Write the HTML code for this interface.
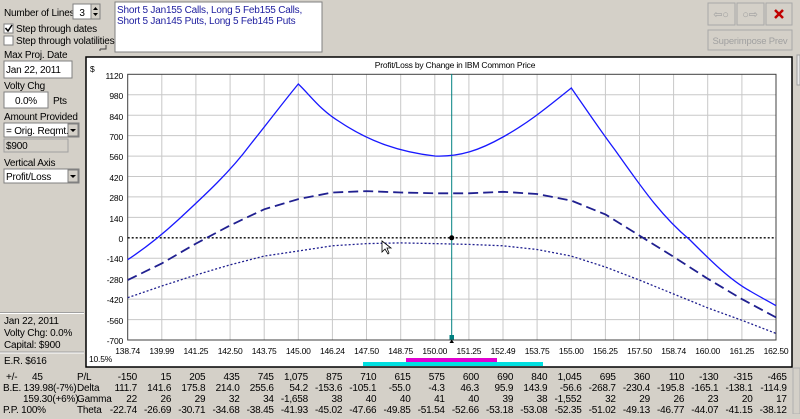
<!DOCTYPE html>
<html><head><meta charset="utf-8"><style>
body{margin:0;width:800px;height:414px;overflow:hidden;background:#d4d0c8;font-family:"Liberation Sans",sans-serif;}
svg text{font-family:"Liberation Sans",sans-serif;}
</style></head><body>
<svg width="800" height="414" xmlns="http://www.w3.org/2000/svg" font-size="10" letter-spacing="-0.2" fill="#000">
<rect width="800" height="414" fill="#d4d0c8"/>
<text x="4" y="16">Number of Lines</text>
<rect x="73" y="4" width="18" height="15" fill="#fff" stroke="#808080"/>
<text x="82" y="16" text-anchor="middle">3</text>
<rect x="91" y="4" width="9" height="15" fill="#d4d0c8" stroke="#808080"/>
<path d="M93 10 L95.5 7 L98 10Z M93 13 L95.5 16 L98 13Z" fill="#000"/>
<rect x="4" y="24" width="9" height="9" fill="#fff" stroke="#808080"/>
<path d="M5.5 28 L8 31 L12 25" stroke="#000" stroke-width="1.5" fill="none"/>
<text x="16" y="32">Step through dates</text>
<rect x="4" y="36" width="9" height="9" fill="#fff" stroke="#808080"/>
<text x="16" y="44">Step through volatilities</text>
<path d="M100 49 h6 v-4 M100 51 v-2" stroke="#404040" fill="none"/>
<text x="4" y="58">Max Proj. Date</text>
<rect x="4" y="61" width="68" height="17" fill="#fff" stroke="#808080"/>
<text x="6" y="73">Jan 22, 2011</text>
<text x="4" y="89">Volty Chg</text>
<rect x="4" y="92" width="44" height="16" fill="#fff" stroke="#808080"/>
<text x="26" y="104" text-anchor="middle">0.0%</text>
<text x="53" y="104">Pts</text>
<text x="4" y="120">Amount Provided</text>
<rect x="4" y="123" width="75" height="14" fill="#fff" stroke="#808080"/>
<text x="6" y="134">= Orig. Reqmt.</text>
<rect x="68" y="124" width="10" height="12" fill="#d4d0c8" stroke="#808080"/>
<path d="M70 129 L73 132 L76 129Z"/>
<rect x="4" y="139" width="64" height="13" fill="#d4d0c8" stroke="#a0a0a0"/>
<text x="6" y="149">$900</text>
<text x="4" y="166">Vertical Axis</text>
<rect x="4" y="169" width="75" height="14" fill="#fff" stroke="#808080"/>
<text x="6" y="180">Profit/Loss</text>
<rect x="68" y="170" width="10" height="12" fill="#d4d0c8" stroke="#808080"/>
<path d="M70 175 L73 178 L76 175Z"/>
<rect x="115" y="2" width="207" height="50" fill="#fff" stroke="#808080"/>
<text x="117" y="13" fill="#2020a0">Short 5 Jan155 Calls, Long 5 Feb155 Calls,</text>
<text x="117" y="24" fill="#2020a0">Short 5 Jan145 Puts, Long 5 Feb145 Puts</text>
<rect x="708" y="3" width="27" height="22" fill="#d4d0c8" stroke="#a8a8a8"/>
<text x="721" y="18" text-anchor="middle" fill="#a0a0a0" font-size="11">⇦○</text>
<rect x="737" y="3" width="27" height="22" fill="#d4d0c8" stroke="#a8a8a8"/>
<text x="750" y="18" text-anchor="middle" fill="#a0a0a0" font-size="11">○⇨</text>
<rect x="766" y="3" width="26" height="22" fill="#d4d0c8" stroke="#a8a8a8"/>
<path d="M775 10 L783 18 M783 10 L775 18" stroke="#c00000" stroke-width="2.5"/>
<rect x="708" y="30" width="84" height="20" fill="#d4d0c8" stroke="#a8a8a8"/>
<text x="750" y="44" text-anchor="middle" fill="#a0a0a0" font-size="9.5">Superimpose Prev</text>
<rect x="797" y="55" width="3" height="30" fill="#e8e8e8" stroke="#a0a0a0"/>
<rect x="86" y="57" width="706" height="310" fill="#fff" stroke="#000" stroke-width="1.5"/>
<text x="90" y="72" font-size="8.5">$</text>
<text x="455" y="68" text-anchor="middle" font-size="8.5">Profit/Loss by Change in IBM Common Price</text>
<g stroke="#c8c8c8" stroke-width="1">
<path d="M127.7 94.7H776M127.7 115.2H776M127.7 135.6H776M127.7 156.1H776M127.7 176.5H776M127.7 196.9H776M127.7 217.4H776M127.7 258.3H776M127.7 278.7H776M127.7 299.1H776M127.7 319.6H776"/>
<path d="M161.8 74V340M195.9 74V340M230.1 74V340M264.2 74V340M298.3 74V340M332.4 74V340M366.5 74V340M400.7 74V340M434.8 74V340M468.9 74V340M503 74V340M537.1 74V340M571.3 74V340M605.4 74V340M639.5 74V340M673.6 74V340M707.7 74V340M741.9 74V340"/>
</g>
<rect x="127.7" y="74.3" width="648.3" height="265.7" fill="none" stroke="#404040"/>
<g font-size="8.5" text-anchor="end">
<text x="123" y="79">1120</text><text x="123" y="99">980</text><text x="123" y="120">840</text><text x="123" y="140">700</text><text x="123" y="160">560</text><text x="123" y="181">420</text><text x="123" y="201">280</text><text x="123" y="222">140</text><text x="123" y="242">0</text><text x="123" y="262">-140</text><text x="123" y="283">-280</text><text x="123" y="303">-420</text><text x="123" y="324">-560</text><text x="123" y="344">-700</text>
</g>
<g font-size="8.5" text-anchor="middle">
<text x="127.7" y="354">138.74</text><text x="161.8" y="354">139.99</text><text x="195.9" y="354">141.25</text><text x="230.1" y="354">142.50</text><text x="264.2" y="354">143.75</text><text x="298.3" y="354">145.00</text><text x="332.4" y="354">146.24</text><text x="366.5" y="354">147.50</text><text x="400.7" y="354">148.75</text><text x="434.8" y="354">150.00</text><text x="468.9" y="354">151.25</text><text x="503" y="354">152.49</text><text x="537.1" y="354">153.75</text><text x="571.3" y="354">155.00</text><text x="605.4" y="354">156.25</text><text x="639.5" y="354">157.50</text><text x="673.6" y="354">158.74</text><text x="707.7" y="354">160.00</text><text x="741.9" y="354">161.25</text><text x="776" y="354">162.50</text>
</g>
<text x="89" y="362" font-size="8.5">10.5%</text>
<rect x="363" y="362" width="180" height="4" fill="#00e0e0"/>
<rect x="406" y="358" width="91" height="4" fill="#e000d0"/>
<path d="M127.7 237.8H776" stroke="#000" stroke-dasharray="2 2" stroke-width="1.3"/>
<path d="M451.7 74V340" stroke="#008080"/>
<rect x="449.5" y="335" width="4.5" height="4.5" fill="#008080"/>
<path d="M449.5 343 L451.7 339.5 L454 343Z"/>
<circle cx="451.7" cy="237.8" r="2.5"/>
<path fill="none" stroke="#1818ff" stroke-width="1.3" d="M127.7 259.7 C150 245 165 232 178 220 C205 195 230 172 250 145 C270 120 285 100 298.3 84 C310 95 320 110 340 122 C370 142 400 152 434.8 156 C460 157 480 150 503 137 C530 122 550 105 571.3 88 C590 115 600 130 615 150 C640 185 660 215 690 240 C710 260 730 280 750 291 C760 297 770 302 776 305.7"/>
<polyline fill="none" stroke="#202090" stroke-width="1.8" stroke-dasharray="10 5" points="127.7,280.1 161.8,263.4 195.9,243.6 230.1,225.4 264.2,209.3 298.3,199.1 332.4,192.5 366.5,191.1 400.7,192.5 434.8,193.3 468.9,193.3 503,191.8 537.1,194 571.3,200.6 605.4,214.4 639.5,235.6 673.6,256.8 707.7,278.7 741.9,299.1 776,317.4"/>
<polyline fill="none" stroke="#202090" stroke-width="1.3" stroke-dasharray="2 2" points="127.7,297.7 161.8,286 195.9,275 230.1,264.8 264.2,256.1 298.3,251 332.4,245.8 366.5,243.6 400.7,242.9 434.8,243.6 468.9,244.4 503,245.8 537.1,249.5 571.3,256.1 605.4,267 639.5,280.1 673.6,294 707.7,307.9 741.9,320.3 776,333.4"/>
<path d="M382 241 L382 252 L385 249 L388 254 L389 253 L387 248 L391 248Z" fill="#fff" stroke="#000" stroke-width="0.8"/>
<path d="M0 312.5H84M0 352H84" stroke="#a0a0a0"/>
<path d="M0 313.5H84M0 353H84" stroke="#fff"/>
<text x="4" y="324">Jan 22, 2011</text>
<text x="4" y="336">Volty Chg: 0.0%</text>
<text x="4" y="348">Capital: $900</text>
<text x="4" y="364">E.R. $616</text>
<text x="6" y="380">+/-</text><text x="32" y="380">45</text>
<text x="3" y="391">B.E. 139.98(-7%)</text>
<text x="23" y="402">159.30(+6%)</text>
<text x="3" y="413">P.P. 100%</text>
<text x="77" y="380">P/L</text>
<text x="77" y="391">Delta</text>
<text x="77" y="402">Gamma</text>
<text x="77" y="413">Theta</text>
<rect x="793" y="368" width="7" height="46" fill="#d4d0c8" stroke="#b0b0b0"/>
<g text-anchor="end">
<text y="380"><tspan x="137">-150</tspan><tspan x="171.2">15</tspan><tspan x="205.4">205</tspan><tspan x="239.6">435</tspan><tspan x="273.8">745</tspan><tspan x="308">1,075</tspan><tspan x="342.2">875</tspan><tspan x="376.4">710</tspan><tspan x="410.6">615</tspan><tspan x="444.8">575</tspan><tspan x="479">600</tspan><tspan x="513.2">690</tspan><tspan x="547.4">840</tspan><tspan x="581.6">1,045</tspan><tspan x="615.8">695</tspan><tspan x="650">360</tspan><tspan x="684.2">110</tspan><tspan x="718.4">-130</tspan><tspan x="752.6">-315</tspan><tspan x="786.8">-465</tspan></text>
<text y="391"><tspan x="137">111.7</tspan><tspan x="171.2">141.6</tspan><tspan x="205.4">175.8</tspan><tspan x="239.6">214.0</tspan><tspan x="273.8">255.6</tspan><tspan x="308">54.2</tspan><tspan x="342.2">-153.6</tspan><tspan x="376.4">-105.1</tspan><tspan x="410.6">-55.0</tspan><tspan x="444.8">-4.3</tspan><tspan x="479">46.3</tspan><tspan x="513.2">95.9</tspan><tspan x="547.4">143.9</tspan><tspan x="581.6">-56.6</tspan><tspan x="615.8">-268.7</tspan><tspan x="650">-230.4</tspan><tspan x="684.2">-195.8</tspan><tspan x="718.4">-165.1</tspan><tspan x="752.6">-138.1</tspan><tspan x="786.8">-114.9</tspan></text>
<text y="402"><tspan x="137">22</tspan><tspan x="171.2">26</tspan><tspan x="205.4">29</tspan><tspan x="239.6">32</tspan><tspan x="273.8">34</tspan><tspan x="308">-1,658</tspan><tspan x="342.2">38</tspan><tspan x="376.4">40</tspan><tspan x="410.6">40</tspan><tspan x="444.8">41</tspan><tspan x="479">40</tspan><tspan x="513.2">39</tspan><tspan x="547.4">38</tspan><tspan x="581.6">-1,552</tspan><tspan x="615.8">32</tspan><tspan x="650">29</tspan><tspan x="684.2">26</tspan><tspan x="718.4">23</tspan><tspan x="752.6">20</tspan><tspan x="786.8">17</tspan></text>
<text y="413"><tspan x="137">-22.74</tspan><tspan x="171.2">-26.69</tspan><tspan x="205.4">-30.71</tspan><tspan x="239.6">-34.68</tspan><tspan x="273.8">-38.45</tspan><tspan x="308">-41.93</tspan><tspan x="342.2">-45.02</tspan><tspan x="376.4">-47.66</tspan><tspan x="410.6">-49.85</tspan><tspan x="444.8">-51.54</tspan><tspan x="479">-52.66</tspan><tspan x="513.2">-53.18</tspan><tspan x="547.4">-53.08</tspan><tspan x="581.6">-52.35</tspan><tspan x="615.8">-51.02</tspan><tspan x="650">-49.13</tspan><tspan x="684.2">-46.77</tspan><tspan x="718.4">-44.07</tspan><tspan x="752.6">-41.15</tspan><tspan x="786.8">-38.12</tspan></text>
</g>
</svg>
</body></html>
